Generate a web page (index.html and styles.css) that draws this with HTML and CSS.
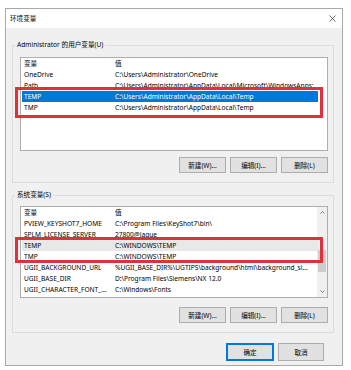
FILE: index.html
```html
<!DOCTYPE html>
<html lang="zh-CN">
<head>
<meta charset="UTF-8">
<meta name="viewport" content="width=device-width, initial-scale=1.0">
<title>环境变量</title>
<link rel="stylesheet" href="styles.css">
</head>
<body>
<div class="window">
  <div class="titlebar">
    <span class="title">环境变量</span>
    <svg class="close" width="7" height="7" viewBox="0 0 7 7"><path d="M0.5 0.5 L6.5 6.5 M6.5 0.5 L0.5 6.5" stroke="#444" stroke-width="0.8" fill="none"/></svg>
  </div>
  <div class="body">
    <fieldset class="group">
      <legend>Administrator 的用户变量(U)</legend>
      <div class="list list-user">
        <div class="rows">
          <div class="row head"><span>变量</span><span>值</span></div>
          <div class="row"><span>OneDrive</span><span>C:\Users\Administrator\OneDrive</span></div>
          <div class="row"><span>Path</span><span>C:\Users\Administrator\AppData\Local\Microsoft\WindowsApps;</span></div>
          <div class="mark mark-user">
            <div class="row selected"><span>TEMP</span><span>C:\Users\Administrator\AppData\Local\Temp</span></div>
            <div class="row"><span>TMP</span><span>C:\Users\Administrator\AppData\Local\Temp</span></div>
          </div>
        </div>
      </div>
      <div class="actions">
        <button>新建(W)...</button>
        <button>编辑(I)...</button>
        <button>删除(L)</button>
      </div>
    </fieldset>

    <fieldset class="group">
      <legend>系统变量(S)</legend>
      <div class="list list-system">
        <div class="rows">
          <div class="row head"><span>变量</span><span>值</span></div>
          <div class="row"><span>PVIEW_KEYSHOT7_HOME</span><span>C:\Program Files\KeyShot7\bin\</span></div>
          <div class="row"><span>SPLM_LICENSE_SERVER</span><span>27800@lague</span></div>
          <div class="mark mark-system">
            <div class="row inactive"><span>TEMP</span><span>C:\WINDOWS\TEMP</span></div>
            <div class="row"><span>TMP</span><span>C:\WINDOWS\TEMP</span></div>
          </div>
          <div class="row"><span>UGII_BACKGROUND_URL</span><span>%UGII_BASE_DIR%\UGTIPS\background\html\background_si...</span></div>
          <div class="row"><span>UGII_BASE_DIR</span><span>D:\Program Files\Siemens\NX 12.0</span></div>
          <div class="row"><span>UGII_CHARACTER_FONT_...</span><span>C:\Windows\Fonts</span></div>
        </div>
        <div class="scrollbar">
          <svg class="arrow" width="5" height="3" viewBox="0 0 5 3"><polyline points="0.5,2.5 2.5,0.5 4.5,2.5" stroke="#606060" stroke-width="0.8" fill="none"/></svg>
          <div class="track"><div class="thumb"></div></div>
          <svg class="arrow" width="5" height="3" viewBox="0 0 5 3"><polyline points="0.5,0.5 2.5,2.5 4.5,0.5" stroke="#606060" stroke-width="0.8" fill="none"/></svg>
        </div>
      </div>
      <div class="actions actions-system">
        <button>新建(W)...</button>
        <button>编辑(I)...</button>
        <button>删除(L)</button>
      </div>
    </fieldset>
  </div>
  <div class="footer">
    <button class="default">确定</button>
    <button>取消</button>
  </div>
</div>
</body>
</html>
```

FILE: styles.css
```css
body {
  margin: 0;
  background: #fff;
  font-family: "Noto Sans", "Noto Sans CJK SC", sans-serif;
  font-size: 6.6px;
  color: #000;
}
.window {
  box-sizing: border-box;
  width: 338px;
  margin: 8px 0 0 5px;
  border: 1px solid #a9a9a9;
  background: #f0f0f0;
}
.titlebar {
  box-sizing: border-box;
  height: 19px;
  background: #fff;
  display: flex;
  align-items: center;
  justify-content: space-between;
  padding: 0 6px 1px 4px;
}
.close {
  display: block;
}
.body {
  padding: 12px 8px 0 6px;
}
.group {
  margin: 0;
  padding: 0 5px 9px 7px;
  border: 1px solid #dcdcdc;
  min-width: 0;
}
.group + .group {
  margin-top: 7px;
}
.group legend {
  padding: 0 2px;
  margin-left: -5px;
  line-height: 10px;
}
.list {
  box-sizing: border-box;
  display: flex;
  border: 1px solid #adadad;
  background: #fff;
}
.list-user {
  margin-top: 7px;
  height: 94px;
}
.list-system {
  margin-top: 6px;
  height: 92px;
}
.rows {
  flex: 1;
  padding-left: 1px;
  min-width: 0;
}
.row {
  display: grid;
  grid-template-columns: 91px 205px;
  width: 296px;
  height: 11px;
  line-height: 11px;
}
.row span {
  padding-left: 2px;
  white-space: nowrap;
  overflow: hidden;
}
.row.selected {
  background: #0078d7;
  color: #fff;
}
.row.inactive {
  background: #e8e8e8;
}
.mark {
  position: relative;
  width: 296px;
}
.mark::after {
  content: "";
  position: absolute;
  border: 3px solid #e0313b;
}
.mark-user::after {
  top: -4px;
  bottom: -5px;
  left: -7px;
  right: -5px;
}
.mark-system::after {
  top: -3px;
  bottom: -1px;
  left: -7px;
  right: -5px;
}
.scrollbar {
  width: 10px;
  background: #f0f0f0;
  display: flex;
  flex-direction: column;
  align-items: center;
}
.arrow {
  display: block;
  margin: 4px 0;
}
.track {
  flex: 1;
  width: 100%;
  display: flex;
  justify-content: center;
}
.thumb {
  width: 8px;
  height: 22px;
  margin-top: 32px;
  background: #cdcdcd;
}
.actions {
  display: flex;
  justify-content: flex-end;
  gap: 4px;
  margin-top: 6px;
}
.actions-system {
  margin-top: 9px;
}
button {
  box-sizing: border-box;
  width: 47px;
  height: 16px;
  padding: 0;
  font-family: inherit;
  font-size: 6.6px;
  color: #000;
  background: #e1e1e1;
  border: 1px solid #adadad;
}
.footer {
  display: flex;
  justify-content: flex-end;
  gap: 4px;
  padding: 10px 18px 4px 0;
}
.footer button {
  height: 18px;
  width: 46px;
}
.footer .default {
  width: 48px;
  border: 1px solid #0078d7;
  box-shadow: inset 0 0 0 1px #0078d7;
}
```
